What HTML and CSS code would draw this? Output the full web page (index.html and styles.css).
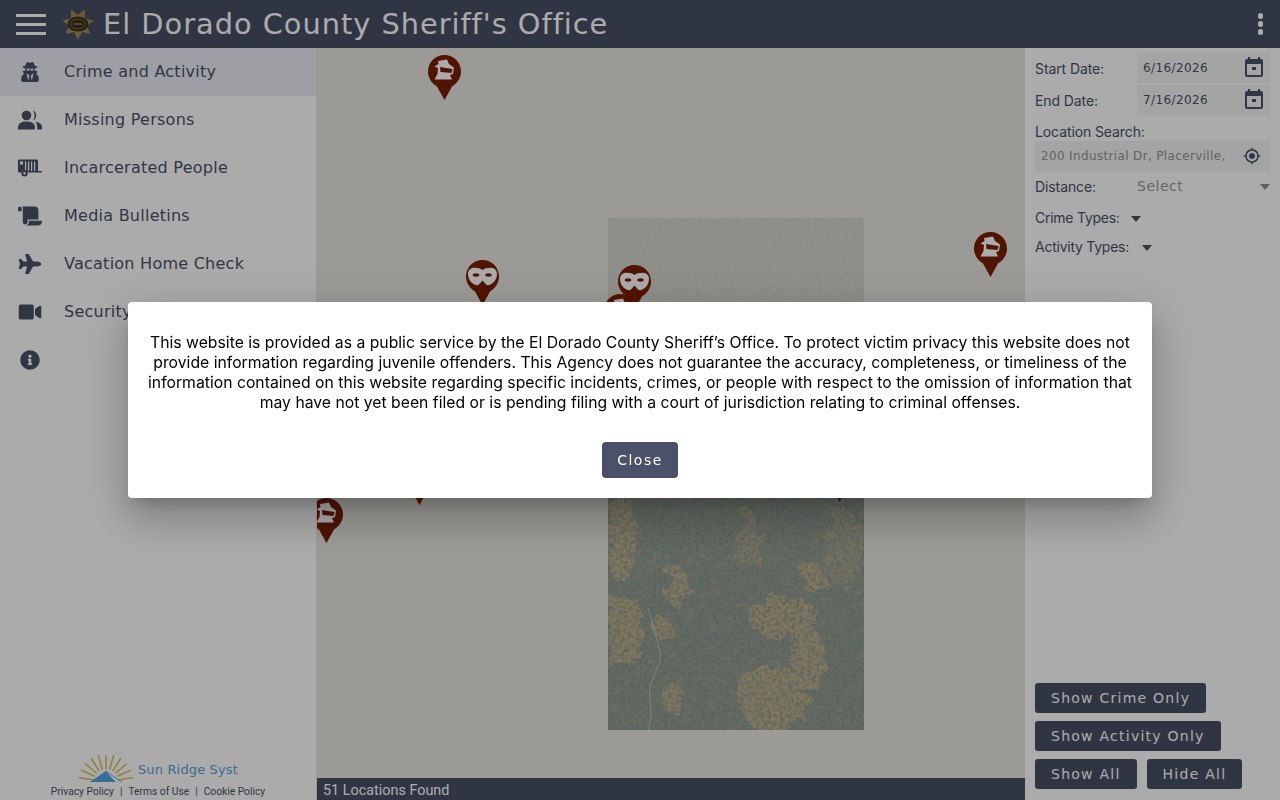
FILE: index.html
```html
<!DOCTYPE html>
<html lang="en">
<head>
    <meta charset="UTF-8">
    <title>El Dorado County Sheriff's Office</title>
    <link rel="stylesheet" href="styles.css">
</head>
<body>
    <svg class="defs" width="0" height="0">
        <defs>
            <symbol id="pin-robber" viewBox="0 0 33 45">
                <path class="pin-body" d="M16.5 0C7.4 0 0 7.4 0 16.5 0 23 4 28.500 9 31.500L16.500 45 24 31.500C29 28.500 33 23 33 16.500 33 7.400 25.600 0 16.500 0z"/>
                <path class="pin-face" d="M10 6L19 4.500 21 9 26 12.500 25 19 22 20 24 24.500 6.500 24.500 9.500 19 10 13 6.500 11.500 10.500 9z"/>
                <path class="pin-body" d="M12 12L24.500 14 23.500 18 12.500 17z"/>
            </symbol>
            <symbol id="pin-mask" viewBox="0 0 33 45">
                <path class="pin-body" d="M16.5 0C7.4 0 0 7.4 0 16.5 0 23 4 28.500 9 31.500L16.500 45 24 31.500C29 28.500 33 23 33 16.500 33 7.400 25.600 0 16.500 0z"/>
                <path class="pin-face" d="M16.500 10C21 7 31 6 31 14 31 21 25 26 20.500 25L16.500 20.500 12.500 25C8 26 2 21 2 14 2 6 12 7 16.500 10z"/>
                <ellipse class="pin-body" cx="10" cy="15" rx="3.300" ry="1.700"/>
                <ellipse class="pin-body" cx="22.500" cy="15" rx="3.300" ry="1.700"/>
            </symbol>
            <filter id="speckle" x="0" y="0" width="100%" height="100%" color-interpolation-filters="sRGB">
                <feTurbulence type="fractalNoise" baseFrequency="0.35" numOctaves="3" seed="7"/>
                <feColorMatrix values="0 0 0 0 0.45  0 0 0 0 0.47  0 0 0 0 0.42  0 0 0 3 -1.3"/>
            </filter>
            <filter id="tan-speckle" x="0" y="0" width="100%" height="100%" color-interpolation-filters="sRGB">
                <feTurbulence type="fractalNoise" baseFrequency="0.08 0.14" numOctaves="4" seed="11"/>
                <feColorMatrix values="0 0 0 0 0.74  0 0 0 0 0.69  0 0 0 0 0.55  0 0 0 4 -2"/>
            </filter>
            <filter id="rough" x="-20%" y="-20%" width="140%" height="140%" color-interpolation-filters="sRGB">
                <feTurbulence type="fractalNoise" baseFrequency="0.07" numOctaves="4" seed="3" result="n"/>
                <feDisplacementMap in="SourceGraphic" in2="n" scale="24" result="d"/>
                <feTurbulence type="fractalNoise" baseFrequency="0.25" numOctaves="3" seed="5"/>
                <feColorMatrix values="0 0 0 0 0  0 0 0 0 0  0 0 0 0 0  0 0 0 3 -.7" result="a"/>
                <feComposite in="d" in2="a" operator="in"/>
            </filter>
        </defs>
    </svg>

    <header class="topbar">
        <div class="burger"><span></span><span></span><span></span></div>
        <svg class="seal" viewBox="0 0 32 32">
            <path fill="#a08a52" d="M16 32L19.900 24.100 28.500 26 24.800 18 31.600 12.400 23 10.400 22.900 1.600 16 7 9.100 1.600 9 10.400 .4 12.400 7.200 18 3.500 26 12.100 24.100z"/>
            <ellipse cx="16" cy="16" rx="10.500" ry="7.500" fill="#3a3120"/>
            <ellipse cx="16" cy="16" rx="7.500" ry="4.800" fill="none" stroke="#8a7440" stroke-width=".8"/>
            <rect x="11.500" y="15" width="9" height="2" fill="#7a6636"/>
        </svg>
        <h1 class="title">El Dorado County Sheriff's Office</h1>
        <div class="more"><span></span><span></span><span></span></div>
    </header>

    <div class="main">
        <nav class="sidebar">
            <a class="nav-item active">
                <svg class="nav-icon" viewBox="0 0 448 512"><path d="M383.9 308.3l23.9-62.6c4-10.5-3.7-21.7-15-21.7h-58.5c11-18.900 17.800-40.600 17.800-64v-.3c39.200-7.800 64-19.100 64-31.700 0-13.300-27.300-25.100-70.100-33-9.200-32.800-27-65.800-40.600-82.800-9.500-11.900-25.900-15.600-39.500-8.800l-27.600 13.800c-9 4.500-19.600 4.500-28.600 0L182.100 3.400c-13.600-6.800-30-3.100-39.500 8.800-13.500 17-31.400 50-40.600 82.800-42.700 7.900-70 19.700-70 33 0 12.600 24.800 23.900 64 31.700v.3c0 23.400 6.800 45.100 17.800 64H56.300c-11.500 0-19.200 11.700-14.700 22.300l25.800 60.200C27.300 329.800 0 372.700 0 422.400v44.800C0 491.900 20.100 512 44.800 512h358.400c24.700 0 44.800-20.100 44.800-44.800v-44.800c0-48.400-25.800-90.400-64.100-114.100zM176 480l-41.600-192 49.600 32 24 40-32 120zm96 0l-32-120 24-40 49.600-32L272 480zm41.700-298.500c-3.900 11.900-7 24.600-16.500 33.400-10.100 9.300-48 22.400-64-25-2.800-8.400-15.400-8.400-18.300 0-17 50.200-56 32.400-64 25-9.500-8.800-12.700-21.500-16.500-33.400-.8-2.500-6.300-5.700-6.300-5.800v-10.800c28.300 3.600 61 5.800 96 5.800s67.700-2.100 96-5.800v10.800c-.1.100-5.600 3.200-6.400 5.800z"/></svg>
                <span>Crime and Activity</span>
            </a>
            <a class="nav-item">
                <svg class="nav-icon" viewBox="0 0 24 20"><circle cx="8.500" cy="5.500" r="4.800"/><path d="M0 19.500v-2.200C0 13.500 3.500 11.500 8.500 11.500s8.500 2 8.500 5.800v2.200z"/><path d="M14.800 10.200c2.100-.4 3.500-2.400 3.500-4.700s-1.400-4.300-3.500-4.700c1.100 1.300 1.800 2.900 1.800 4.700s-.7 3.400-1.800 4.700zM17 11.800c1.700 1.300 2.300 3.200 2.300 5.500v2.200H24v-2.200c0-3.300-3-5.200-7-5.500z"/></svg>
                <span>Missing Persons</span>
            </a>
            <a class="nav-item">
                <svg class="nav-icon" viewBox="0 0 24 17"><path fill-rule="evenodd" d="M1 0h18a1 1 0 0 1 1 1v10.500h3.500a.5.500 0 0 1 .5.5v.5a.5.500 0 0 1-.5.500H9.900a3.500 3.500 0 0 0-6.800 0H1a1 1 0 0 1-1-1V1a1 1 0 0 1 1-1zm1 2v3h3V2zm5 0v9.500h1.200V2zm3 0v9.500h1.200V2zm3 0v9.500h1.200V2zm3 0v9.500h1.200V2z"/><path fill-rule="evenodd" d="M6.500 10.500a3.200 3.200 0 1 1 0 6.400 3.200 3.200 0 0 1 0-6.400zm0 2a1.200 1.200 0 1 0 0 2.400 1.200 1.200 0 0 0 0-2.400z"/></svg>
                <span>Incarcerated People</span>
            </a>
            <a class="nav-item">
                <svg class="nav-icon" viewBox="0 0 640 512"><path d="M48 0C21.530 0 0 21.530 0 48v64c0 8.840 7.160 16 16 16h80V48C96 21.530 74.470 0 48 0zm208 412.570V352h288V96c0-52.940-43.060-96-96-96H111.590C121.740 13.410 128 29.920 128 48v368c0 38.870 34.650 69.650 74.750 63.120C234.220 474 256 444.460 256 412.570zM288 384v32c0 52.930-43.060 96-96 96h336c61.860 0 112-50.140 112-112 0-8.840-7.160-16-16-16H288z"/></svg>
                <span>Media Bulletins</span>
            </a>
            <a class="nav-item">
                <svg class="nav-icon" viewBox="0 0 576 512"><path d="M480 192H365.710L260.610 8.060A16.014 16.014 0 0 0 246.710 0h-65.500c-10.630 0-18.300 10.170-15.380 20.390L214.860 192H112l-43.200-57.600c-3.020-4.030-7.770-6.400-12.800-6.400H16.010C5.600 128-2.040 137.780.49 147.880L32 256 .49 364.120C-2.040 374.220 5.600 384 16.010 384H56c5.040 0 9.780-2.370 12.800-6.400L112 320h102.860l-49.030 171.600c-2.920 10.220 4.750 20.400 15.380 20.400h65.500c5.740 0 11.040-3.080 13.890-8.060L365.710 320H480c35.350 0 96-28.650 96-64s-60.650-64-96-64z"/></svg>
                <span>Vacation Home Check</span>
            </a>
            <a class="nav-item">
                <svg class="nav-icon" viewBox="0 0 576 512"><path d="M336.200 64H47.800C21.400 64 0 85.400 0 111.800v288.400C0 426.600 21.400 448 47.800 448h288.400c26.400 0 47.800-21.400 47.800-47.800V111.800c0-26.400-21.400-47.800-47.800-47.800zm189.400 37.700L416 177.300v157.400l109.600 75.500c21.200 14.600 50.400-.3 50.400-25.800V127.500c0-25.400-29.100-40.400-50.400-25.800z"/></svg>
                <span>Security Camera Registry</span>
            </a>
            <a class="nav-item">
                <svg class="nav-icon info" viewBox="0 0 512 512"><path d="M256 8C119.043 8 8 119.083 8 256c0 136.997 111.043 248 248 248s248-111.003 248-248C504 119.083 392.957 8 256 8zm0 110c23.196 0 42 18.804 42 42s-18.804 42-42 42-42-18.804-42-42 18.804-42 42-42zm56 254c0 6.627-5.373 12-12 12h-88c-6.627 0-12-5.373-12-12v-24c0-6.627 5.373-12 12-12h12v-64h-12c-6.627 0-12-5.373-12-12v-24c0-6.627 5.373-12 12-12h64c6.627 0 12 5.373 12 12v100h12c6.627 0 12 5.373 12 12v24z"/></svg>
            </a>

            <div class="side-footer">
                <div class="brand">
                    <svg class="brand-logo" viewBox="0 0 56 28">
                        <path stroke="#d9bf5e" stroke-width="1.600" stroke-linecap="round" fill="none" d="M1.300 22.700L15.100 24.700M3.400 15.300L16.200 21.100M7.600 8.900L18.200 18M13.400 3.800L21 15.600M20.400 .6L24.300 14M28 .5V13.500M35.600 .6L31.700 14M42.600 3.800L35 15.600M48.400 8.900L37.800 18M52.600 15.300L39.800 21.100M54.700 22.700L40.900 24.700"/>
                        <path fill="#4fa3e0" d="M12 27L27.700 16 37.700 27z"/>
                        <path fill="none" stroke="#4fa3e0" stroke-width=".9" d="M27.700 16L43.700 27"/>
                    </svg>
                    <span class="brand-name">Sun Ridge Syst</span>
                </div>
                <div class="legal">
                    <a>Privacy Policy</a><span class="sep">|</span><a>Terms of Use</a><span class="sep">|</span><a>Cookie Policy</a>
                </div>
            </div>
        </nav>

        <section class="map">
            <svg class="tiles" width="256" height="512" viewBox="0 0 256 512">
                <rect width="256" height="256" fill="#d6d8cf"/>
                <rect y="256" width="256" height="256" fill="#929e95"/>
                <rect y="256" width="256" height="256" filter="url(#tan-speckle)" opacity=".3"/>
                <g filter="url(#rough)" fill="#cdb98f" opacity=".8">
                    <rect x="0" y="377" width="32" height="70"/>
                    <ellipse cx="55" cy="411" rx="10" ry="11"/>
                    <ellipse cx="69" cy="369" rx="13" ry="19"/>
                    <ellipse cx="65" cy="482" rx="11" ry="15"/>
                    <ellipse cx="165" cy="480" rx="36" ry="34"/>
                    <ellipse cx="175" cy="400" rx="36" ry="20"/>
                    <ellipse cx="200" cy="440" rx="18" ry="30"/>
                    <ellipse cx="205" cy="360" rx="12" ry="16"/>
                    <ellipse cx="14" cy="320" rx="14" ry="46"/>
                    <ellipse cx="140" cy="322" rx="12" ry="30" opacity=".6"/>
                    <ellipse cx="235" cy="330" rx="20" ry="40" opacity=".5"/>
                </g>
                <rect y="256" width="256" height="256" filter="url(#speckle)" opacity=".35"/>
                <rect width="256" height="256" filter="url(#speckle)" opacity=".08"/>
                <g fill="none" stroke="#cfd6cf" stroke-width="1" opacity=".6">
                    <path d="M40 390c6 20 8 30 12 44 3 10-8 22-10 36-2 14 4 28-2 42"/>
                    <path d="M100 30c10 14 24 20 30 36 8 14 40 14 60 22"/>
                </g>
            </svg>

            <svg class="pin pin-a"><use href="#pin-robber"/></svg>
            <svg class="pin pin-b"><use href="#pin-robber"/></svg>
            <svg class="pin pin-c"><use href="#pin-mask"/></svg>
            <svg class="pin pin-e"><use href="#pin-robber"/></svg>
            <svg class="pin pin-d"><use href="#pin-mask"/></svg>
            <svg class="pin pin-f"><use href="#pin-robber"/></svg>
            <svg class="pin pin-g"><use href="#pin-mask"/></svg>
            <svg class="pin pin-h"><use href="#pin-mask"/></svg>

            <div class="status">51 Locations Found</div>
        </section>

        <aside class="filters">
            <div class="row date-row">
                <label class="lbl">Start Date:</label>
                <div class="field date-field">
                    <span>6/16/2026</span>
                    <svg class="cal" viewBox="0 0 24 24"><path d="M19 3h-1V1h-2v2H8V1H6v2H5c-1.110 0-2 .9-2 2v14a2 2 0 0 0 2 2h14c1.100 0 2-.9 2-2V5c0-1.100-.9-2-2-2zm0 16H5V8h14v11zM10 11h4v3h-4z"/></svg>
                </div>
            </div>
            <div class="row date-row">
                <label class="lbl">End Date:</label>
                <div class="field date-field">
                    <span>7/16/2026</span>
                    <svg class="cal" viewBox="0 0 24 24"><path d="M19 3h-1V1h-2v2H8V1H6v2H5c-1.110 0-2 .9-2 2v14a2 2 0 0 0 2 2h14c1.100 0 2-.9 2-2V5c0-1.100-.9-2-2-2zm0 16H5V8h14v11zM10 11h4v3h-4z"/></svg>
                </div>
            </div>
            <label class="lbl loc-lbl">Location Search:</label>
            <div class="field loc-field">
                <span class="loc-text">200 Industrial Dr, Placerville,</span>
                <svg class="gps" viewBox="0 0 24 24"><path d="M12 8c-2.210 0-4 1.790-4 4s1.790 4 4 4 4-1.790 4-4-1.790-4-4-4zm8.940 3A8.994 8.994 0 0 0 13 3.060V1h-2v2.060A8.994 8.994 0 0 0 3.060 11H1v2h2.060A8.994 8.994 0 0 0 11 20.940V23h2v-2.060A8.994 8.994 0 0 0 20.940 13H23v-2h-2.060zM12 19c-3.870 0-7-3.130-7-7s3.130-7 7-7 7 3.130 7 7-3.130 7-7 7z"/></svg>
            </div>
            <div class="row dist-row">
                <label class="lbl">Distance:</label>
                <div class="select-box"><span>Select</span><i class="caret faint"></i></div>
            </div>
            <div class="row type-row">
                <label class="lbl">Crime Types:</label><i class="caret"></i>
            </div>
            <div class="row type-row activity-row">
                <label class="lbl">Activity Types:</label><i class="caret"></i>
            </div>

            <div class="btns">
                <div class="btn-line"><button class="btn">Show Crime Only</button></div>
                <div class="btn-line"><button class="btn">Show Activity Only</button></div>
                <div class="btn-line"><button class="btn">Show All</button><button class="btn">Hide All</button></div>
            </div>
        </aside>
    </div>

    <div class="overlay">
        <div class="dialog">
            <p class="dialog-text">This website is provided as a public service by the El Dorado County Sheriff’s Office. To protect victim privacy this website does not provide information regarding juvenile offenders. This Agency does not guarantee the accuracy, completeness, or timeliness of the information contained on this website regarding specific incidents, crimes, or people with respect to the omission of information that may have not yet been filed or is pending filing with a court of jurisdiction relating to criminal offenses.</p>
            <button class="close-btn">Close</button>
        </div>
    </div>
</body>
</html>
```

FILE: styles.css
```css
*{
    box-sizing: border-box;
}
html, body{
    height: 100%;
}
body{
    margin: 0;
    display: flex;
    flex-direction: column;
    overflow: hidden;
    background-color: white;
    color: #4a5168;
    font-family: "DejaVu Sans", sans-serif;
}
.defs{
    position: absolute;
}

/* top bar */
.topbar{
    height: 48px;
    flex: none;
    display: flex;
    align-items: center;
    padding: 0 16px;
    background-color: #485065;
    color: white;
}
.burger{
    width: 30px;
    display: flex;
    flex-direction: column;
    gap: 6px;
}
.burger span{
    height: 3px;
    background-color: white;
}
.seal{
    width: 32px;
    height: 32px;
    margin-left: 16px;
    flex: none;
}
.title{
    margin: 0 0 0 9px;
    font-size: 28.800px;
    font-weight: normal;
    letter-spacing: 1px;
    line-height: 48px;
    flex: 1;
    white-space: nowrap;
}
.more{
    display: flex;
    flex-direction: column;
    gap: 2.500px;
    margin-right: 1px;
}
.more span{
    width: 5.500px;
    height: 5.500px;
    border-radius: 50%;
    background-color: white;
}

.main{
    flex: 1;
    display: flex;
    min-height: 0;
}

/* left menu */
.sidebar{
    width: 317px;
    flex: none;
    display: flex;
    flex-direction: column;
    background-color: white;
    border-right: 1px solid #e8e6e0;
    position: relative;
    z-index: 2;
}
.nav-item{
    height: 48px;
    flex: none;
    display: flex;
    align-items: center;
    padding-left: 18px;
    font-size: 16px;
    letter-spacing: 0.25px;
    white-space: nowrap;
}
.nav-item span{
    margin-top: -2px;
}
.nav-item.active{
    background-color: #ebeef5;
}
.nav-icon{
    width: 24px;
    height: 20px;
    margin-right: 22px;
    flex: none;
    fill: #4a5168;
}
.side-footer{
    margin-top: auto;
    height: 45px;
    display: flex;
    flex-direction: column;
    align-items: center;
}
.brand{
    height: 28px;
    flex: none;
    display: flex;
    align-items: flex-start;
    gap: 4px;
}
.brand-logo{
    width: 56px;
    height: 28px;
}
.brand-name{
    font-size: 13px;
    line-height: 15px;
    margin-top: 7px;
    letter-spacing: 0.15px;
    color: #5aa0d8;
}
.legal{
    font-family: "Roboto", sans-serif;
    font-size: 10.250px;
    line-height: 16px;
    margin-top: 1px;
    white-space: nowrap;
}
.sep{
    margin: 0 6px;
}

/* map */
.map{
    flex: 1;
    position: relative;
    overflow: hidden;
    background-color: #e8e6e0;
}
.tiles{
    position: absolute;
    left: 291px;
    top: 170px;
}
.pin{
    position: absolute;
    width: 33px;
    height: 45px;
}
.pin-body{
    fill: #7a1e00;
}
.pin-face{
    fill: white;
}
.pin-a{ left: 111px; top: 7px; }
.pin-b{ left: 657px; top: 184px; }
.pin-c{ left: 149px; top: 212px; }
.pin-d{ left: 301px; top: 217px; }
.pin-e{ left: 287px; top: 246px; }
.pin-f{ left: -7px; top: 450px; }
.pin-g{ left: 86px; top: 412px; }
.pin-h{ left: 506px; top: 409px; }
.status{
    position: absolute;
    left: 0;
    right: 0;
    bottom: 0;
    height: 22px;
    padding-left: 6px;
    background-color: #485065;
    color: white;
    font-family: "Roboto", sans-serif;
    font-size: 14.400px;
    line-height: 25px;
}

/* right panel */
.filters{
    width: 255px;
    flex: none;
    display: flex;
    flex-direction: column;
    padding: 5px 10px 11px;
    background-color: white;
    color: #4a5168;
}
.lbl{
    font-family: "Inter", sans-serif;
    font-size: 14px;
    letter-spacing: -0.1px;
    line-height: 20px;
    color: #4a5168;
    white-space: nowrap;
}
.row{
    display: flex;
    align-items: center;
}
.date-row{
    height: 30px;
    margin-bottom: 2px;
}
.date-row .lbl{
    width: 102px;
    flex: none;
    padding-top: 2px;
}
.field{
    background-color: #f5f5f5;
    height: 30px;
    display: flex;
    align-items: center;
    justify-content: space-between;
    padding: 0 4px 0 6px;
    font-size: 12px;
    letter-spacing: 0.4px;
}
.date-field{
    flex: 1;
}
.cal{
    width: 24px;
    height: 24px;
    fill: #4a5168;
}
.loc-lbl{
    margin-top: 6px;
    height: 18px;
    line-height: 18px;
}
.loc-field{
    padding-right: 9px;
}
.loc-text{
    color: #949494;
    letter-spacing: 0.35px;
    font-size: 12px;
    white-space: nowrap;
}
.gps{
    width: 18px;
    height: 18px;
    fill: #4a5168;
}
.dist-row{
    height: 30px;
}
.dist-row .lbl{
    width: 102px;
    flex: none;
    padding-top: 2px;
}
.select-box{
    flex: 1;
    display: flex;
    align-items: center;
    justify-content: space-between;
    color: #999;
    font-size: 14px;
    letter-spacing: 0.5px;
}
.caret{
    display: inline-block;
    width: 0;
    height: 0;
    border-left: 5.500px solid transparent;
    border-right: 5.500px solid transparent;
    border-top: 6px solid #4a5168;
    margin-left: 11px;
    margin-top: 2px;
}
.caret.faint{
    border-top-color: #8a8f9c;
}
.type-row{
    height: 30px;
    margin-top: 2px;
}
.type-row .lbl{
    letter-spacing: -0.25px;
}
.activity-row{
    margin-top: -1px;
}
.activity-row .caret{
    margin-left: 13px;
}
.btns{
    margin-top: auto;
    display: flex;
    flex-direction: column;
    gap: 8px;
}
.btn-line{
    display: flex;
    gap: 10px;
}
.btn{
    height: 30px;
    padding: 0 16px;
    border: none;
    border-radius: 3px;
    background-color: #485065;
    color: white;
    font-family: "DejaVu Sans", sans-serif;
    font-size: 14px;
    letter-spacing: 1.250px;
}

/* modal */
.overlay{
    position: fixed;
    top: 0;
    left: 0;
    right: 0;
    bottom: 0;
    z-index: 10;
    display: flex;
    align-items: center;
    justify-content: center;
    background-color: rgba(0, 0, 0, 0.33);
}
.dialog{
    width: 1024px;
    height: 196px;
    padding: 31px 16px 0;
    background-color: white;
    border-radius: 4px;
    text-align: center;
    box-shadow: 0 11px 15px -7px rgba(0,0,0,.2), 0 24px 38px 3px rgba(0,0,0,.14), 0 9px 46px 8px rgba(0,0,0,.12);
}
.dialog-text{
    margin: 0;
    font-family: "Inter", sans-serif;
    font-size: 15.750px;
    line-height: 20px;
    color: black;
}
.close-btn{
    margin-top: 29px;
    width: 76px;
    height: 36px;
    border: none;
    border-radius: 4px;
    background-color: #4a5168;
    color: white;
    font-family: "DejaVu Sans", sans-serif;
    font-size: 14px;
    letter-spacing: 1.500px;
}
```
